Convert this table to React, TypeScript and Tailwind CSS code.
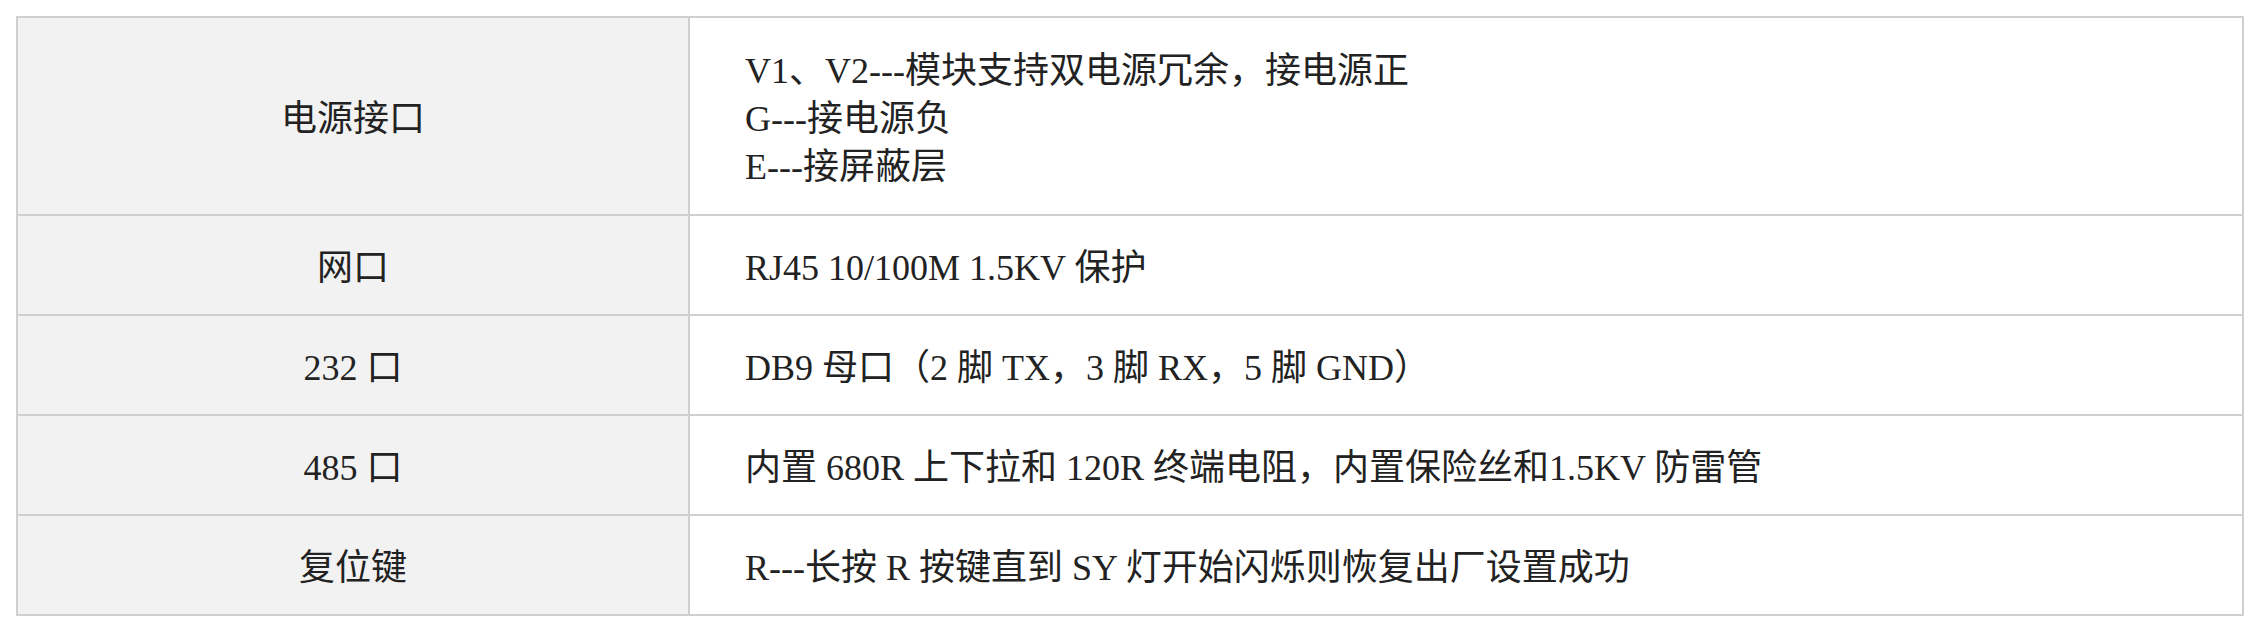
const rows: { label: string; lines: string[]; tall?: boolean }[] = [
  {
    label: "电源接口",
    lines: ["V1、V2---模块支持双电源冗余，接电源正", "G---接电源负", "E---接屏蔽层"],
    tall: true,
  },
  { label: "网口", lines: ["RJ45 10/100M 1.5KV 保护"] },
  { label: "232 口", lines: ["DB9 母口（2 脚 TX，3 脚 RX，5 脚 GND）"] },
  { label: "485 口", lines: ["内置 680R 上下拉和 120R 终端电阻，内置保险丝和1.5KV 防雷管"] },
  { label: "复位键", lines: ["R---长按 R 按键直到 SY 灯开始闪烁则恢复出厂设置成功"] },
];

const App = () => {
  return (
    <div
      className="w-[2260px] h-[632px] bg-white pt-[16px] pl-[16px] text-[36px] leading-[48px] text-[#222]"
      style={{ fontFamily: '"Liberation Serif", "Noto Sans CJK SC", serif' }}
    >
      <div className="w-[2228px] grid grid-cols-[672px_1fr] border-l-2 border-t-2 border-[#cfcfcf]">
        {rows.map((row) => (
          <div key={row.label} className="contents">
            <div
              className={`flex items-center justify-center pt-[5px] bg-[#f2f2f2] border-r-2 border-b-2 border-[#cfcfcf] ${
                row.tall ? "h-[198px]" : "h-[100px]"
              }`}
            >
              {row.label}
            </div>
            <div
              className={`flex flex-col justify-center pt-[5px] pl-[55px] border-r-2 border-b-2 border-[#cfcfcf] ${
                row.tall ? "h-[198px]" : "h-[100px]"
              }`}
            >
              {row.lines.map((line) => (
                <div key={line} className="whitespace-nowrap">
                  {line}
                </div>
              ))}
            </div>
          </div>
        ))}
      </div>
    </div>
  );
};

export default App;
